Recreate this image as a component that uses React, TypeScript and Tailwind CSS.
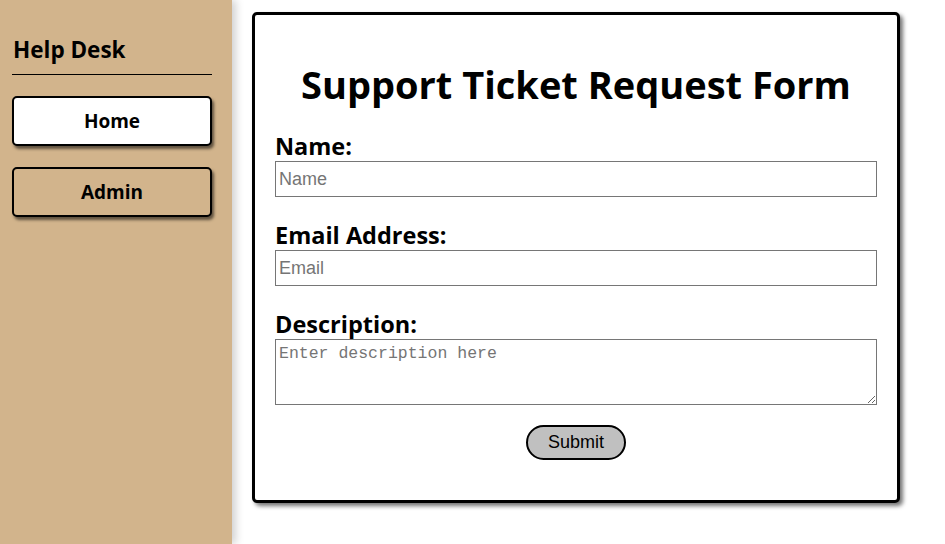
import React from 'react'

function Sidebar() {
  return (
    <div className="relative z-10 flex w-[232px] shrink-0 flex-col bg-[#d2b48c] px-3 pt-[36px] shadow-[4px_0_8px_rgba(0,0,0,0.18)]">
      <h2 className="pl-[1px] text-[22.5px] font-bold leading-[28px]">Help Desk</h2>
      <hr className="mt-[10px] w-[200px] border-black" />
      <button className="mt-[21px] h-[50px] w-[200px] rounded-[5px] border-2 border-black bg-white text-[19px] font-bold shadow-[2px_3px_3px_rgba(0,0,0,0.55)]">
        Home
      </button>
      <button className="mt-[21px] h-[50px] w-[200px] rounded-[5px] border-2 border-black bg-[#d2b48c] text-[19px] font-bold shadow-[2px_3px_3px_rgba(0,0,0,0.55)]">
        Admin
      </button>
    </div>
  )
}

function TicketForm() {
  return (
    <div className="ml-[20px] mt-[12px] h-[491px] w-[648px] rounded-[5px] border-[3px] border-black bg-white px-[20px] shadow-[3px_3px_4px_rgba(0,0,0,0.55)]">
      <h1 className="mt-[44px] text-center text-[38px] font-bold leading-[50px]">
        Support Ticket Request Form
      </h1>
      <form className="mt-[22px] flex flex-col" onSubmit={e => e.preventDefault()}>
        <label className="text-[23.5px] font-bold leading-[30px]">Name:</label>
        <input
          placeholder="Name"
          className="h-[36px] w-full border border-[#767676] px-[3px] font-['Liberation_Sans',Arial,sans-serif] text-[18px] placeholder:text-[#757575]"
        />
        <label className="mt-[23px] text-[23.5px] font-bold leading-[30px]">Email Address:</label>
        <input
          placeholder="Email"
          className="h-[36px] w-full border border-[#767676] px-[3px] font-['Liberation_Sans',Arial,sans-serif] text-[18px] placeholder:text-[#757575]"
        />
        <label className="mt-[23px] text-[23.5px] font-bold leading-[30px]">Description:</label>
        <textarea
          placeholder="Enter description here"
          className="h-[66px] w-full border border-[#767676] px-[3px] pt-[4px] font-['Liberation_Mono',monospace] text-[16.5px] leading-[20px] placeholder:text-[#757575]"
        />
        <div className="mt-[20px] flex justify-center">
          <button
            type="submit"
            className="h-[35px] w-[100px] rounded-full border-2 border-black bg-[#c0c0c0] font-['Liberation_Sans',Arial,sans-serif] text-[18px]"
          >
            Submit
          </button>
        </div>
      </form>
    </div>
  )
}

export default function App() {
  return (
    <div className="flex h-[544px] w-[945px] bg-white font-['Open_Sans',sans-serif] text-black">
      <Sidebar />
      <div className="flex-1">
        <TicketForm />
      </div>
    </div>
  )
}
